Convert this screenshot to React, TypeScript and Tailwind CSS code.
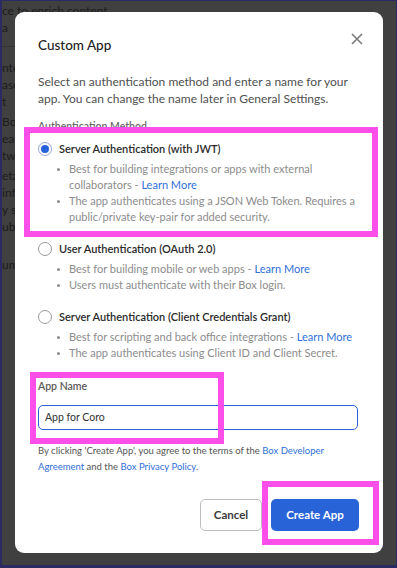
import React from 'react';

const methods = [
    {
        title: 'Server Authentication (with JWT)',
        checked: true,
        bullets: [
            { text: 'Best for building integrations or apps with external collaborators', link: true },
            { text: 'The app authenticates using a JSON Web Token. Requires a public/private key-pair for added security.', link: false },
        ],
    },
    {
        title: 'User Authentication (OAuth 2.0)',
        checked: false,
        bullets: [
            { text: 'Best for building mobile or web apps', link: true },
            { text: 'Users must authenticate with their Box login.', link: false },
        ],
    },
    {
        title: 'Server Authentication (Client Credentials Grant)',
        checked: false,
        bullets: [
            { text: 'Best for scripting and back office integrations', link: true },
            { text: 'The app authenticates using Client ID and Client Secret.', link: false },
        ],
    },
];

const bgLines = [
    { text: 'ce to enrich content', mt: 'mt-[1px]' },
    { text: 'a', mt: 'mt-0' },
    { text: 'ntent and metadata', mt: 'mt-[12px]' },
    { text: 'ased on the', mt: 'mt-0' },
    { text: 't', mt: 'mt-0' },
    { text: 'Box AI', mt: 'mt-[3px]' },
    { text: 'eas of the', mt: 'mt-0' },
    { text: 'tween', mt: 'mt-0' },
    { text: 'etadata', mt: 'mt-[3px]' },
    { text: 'information', mt: 'mt-0' },
    { text: 'y sources', mt: 'mt-0' },
    { text: 'ublic', mt: 'mt-0' },
    { text: 'ument', mt: 'mt-[21px]' },
];

function Radio({ checked }: { checked: boolean }) {
    return (
        <span className={`flex items-center justify-center w-[14px] h-[14px] rounded-full border bg-white shrink-0 ${checked ? 'border-[#8fa6d6]' : 'border-[#9a9a9a]'}`}>
            {checked && <span className="w-[8px] h-[8px] rounded-full bg-[#2463dc]" />}
        </span>
    );
}

export default function App() {
    return (
        <div className="relative w-[397px] h-[568px] overflow-hidden bg-[#404040] border-t border-r border-l-2 border-b-[3px] border-[#2b2a63] font-['Lato','Noto_Sans',sans-serif]">

            {/* page behind the dialog */}
            <div className="flex flex-col text-[12px] leading-[17px] text-[#1c1c1c] whitespace-nowrap">
                {bgLines.slice(0, 2).map((l, i) => (
                    <div key={i} className={l.mt}>{l.text}</div>
                ))}
                <div className="mt-[10px] h-px w-[140px] bg-[#333333]" />
                {bgLines.slice(2).map((l, i) => (
                    <div key={i} className={l.mt}>{l.text}</div>
                ))}
            </div>

            {/* dialog */}
            <div className="absolute left-[13px] top-[11px] w-[368px] h-[541px] bg-white rounded-[9px] pt-[24px] pl-[23px] pr-[24px] flex flex-col">
                <div className="flex items-start justify-between">
                    <h2 className="text-[13.5px] leading-[18px] font-medium text-[#222222]">Custom App</h2>
                    <svg width="12" height="12" viewBox="0 0 12 12" className="mt-[-3px] mr-[-4px]">
                        <path d="M1 1L11 11M11 1L1 11" stroke="#7a7a7a" strokeWidth="1.6" />
                    </svg>
                </div>

                <p className="mt-[19px] text-[12px] leading-[17px] text-[#4f4f4f]">
                    Select an authentication method and enter a name for your app. You can change the name later in General Settings.
                </p>

                <div className="mt-[11px] text-[10.5px] leading-[16px] font-semibold text-[#6b6b6b]">Authentication Method</div>

                <div className="flex flex-col">
                    {methods.map((m, i) => (
                        <div key={i} className={i === 0 ? 'mt-[6px]' : 'mt-[15px]'}>
                            <div className="flex items-center gap-[7px] h-[18px]">
                                <Radio checked={m.checked} />
                                <span className="text-[11px] font-semibold text-[#2a2a2a]">{m.title}</span>
                            </div>
                            <ul className="mt-[3px] flex flex-col pl-[19px] text-[11px] leading-[16px] text-[#8c8c8c]">
                                {m.bullets.map((b, j) => (
                                    <li key={j} className="flex">
                                        <span className="w-[12px] shrink-0 flex justify-start pt-[7px]">
                                            <span className="w-[3px] h-[3px] rounded-full bg-[#8c8c8c]" />
                                        </span>
                                        <span>
                                            {b.text}
                                            {b.link && (
                                                <>
                                                    {' - '}
                                                    <span className="text-[#2f6fd8]">Learn More</span>
                                                </>
                                            )}
                                        </span>
                                    </li>
                                ))}
                            </ul>
                        </div>
                    ))}
                </div>

                <label className="mt-[17px] text-[10.5px] leading-[16px] font-semibold text-[#5a5a5a]">App Name</label>
                <div className="mt-[11px] h-[25px] w-[320px] rounded-[5px] border border-[#2a62d9] flex items-center px-[6px] text-[10.5px] text-[#333333]">
                    App for Coro
                </div>

                <p className="mt-[13px] text-[9.5px] leading-[16px] text-[#555555]">
                    By clicking 'Create App', you agree to the terms of the <span className="text-[#2f6fd8]">Box Developer Agreement</span> and the <span className="text-[#2f6fd8]">Box Privacy Policy</span>.
                </p>

                <div className="mt-[24px] flex justify-end gap-[9px]">
                    <button className="h-[32px] w-[62px] rounded-[5px] border border-[#bdbdbd] bg-white text-[11.5px] font-bold text-[#3a3a3a]">Cancel</button>
                    <button className="h-[32px] w-[88px] rounded-[5px] bg-[#2863d8] text-[11.5px] font-bold text-white">Create App</button>
                </div>
            </div>

            {/* highlight annotations */}
            <div className="absolute left-[22px] top-[126px] w-[354px] h-[110px] border-[6px] border-[#fc4fe9]" />
            <div className="absolute left-[28px] top-[371px] w-[194px] h-[72px] border-[6px] border-[#fc4fe9]" />
            <div className="absolute left-[260px] top-[480px] w-[117px] h-[64px] border-[6px] border-[#fc4fe9]" />
        </div>
    );
}
